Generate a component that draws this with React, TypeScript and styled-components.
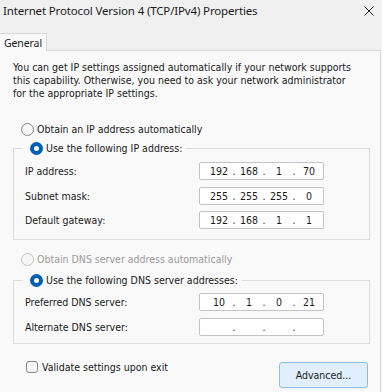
import React from "react";
import styled, { createGlobalStyle } from "styled-components";

const GlobalStyle = createGlobalStyle`
  html, body {
    margin: 0;
    padding: 0;
    background: #f0f0f0;
  }
`;

const dlgFont = `"DejaVu Sans Condensed", "DejaVu Sans", sans-serif`;
const uiFont = `"Noto Sans", "Open Sans", sans-serif`;

const Window = styled.div`
  width: 382px;
  height: 392px;
  background: #f0f0f0;
  overflow: hidden;
  font-family: ${dlgFont};
  font-size: 10.5px;
  color: #1a1a1a;
`;

const TitleBar = styled.div`
  display: flex;
  align-items: center;
  justify-content: space-between;
  height: 21px;
  padding: 0 7px 0 3px;
  font-family: ${uiFont};
  font-size: 11.5px;
  letter-spacing: -0.15px;
  color: #1b1b1b;
`;

const CloseButton = styled.button`
  display: flex;
  align-items: center;
  justify-content: center;
  width: 12px;
  height: 12px;
  padding: 0;
  border: none;
  background: transparent;
  color: #222;
`;

const TabStrip = styled.div`
  display: flex;
  padding-top: 12px;
`;

const Tab = styled.div`
  height: 17px;
  padding: 0 4px 0 4px;
  display: flex;
  align-items: center;
  background: #f9f9f9;
  border: 1px solid #d9d9d9;
  border-left: none;
  border-bottom: none;
  font-family: ${uiFont};
  font-size: 10.5px;
  letter-spacing: -0.1px;
  position: relative;
  z-index: 1;
  margin-bottom: -1px;
`;

const Panel = styled.div`
  width: 381px;
  height: 360px;
  box-sizing: border-box;
  background: #f9f9f9;
  border: 1px solid #d9d9d9;
  border-left: none;
  padding: 10px 10px 0 13px;
`;

const Intro = styled.p`
  margin: 0 0 20px;
  line-height: 13px;
  white-space: nowrap;
`;

const OptionRow = styled.label<{ $disabled?: boolean }>`
  display: flex;
  align-items: center;
  gap: 3px;
  height: 18px;
  padding-left: 8px;
  color: ${({ $disabled }) => ($disabled ? "#9a9a9a" : "#1a1a1a")};
`;

const RadioDot = styled.span<{ $checked?: boolean; $disabled?: boolean }>`
  width: 13px;
  height: 13px;
  box-sizing: border-box;
  border-radius: 50%;
  flex-shrink: 0;
  background: ${({ $checked }) => ($checked ? "#fff" : "#f6f6f6")};
  border: ${({ $checked, $disabled }) =>
    $checked
      ? "4px solid #005fb8"
      : $disabled
      ? "1px solid #c4c4c4"
      : "1px solid #8a8a8a"};
`;

const Group = styled.fieldset<{ $top: number; $padTop: number; $padBottom: number }>`
  margin: ${({ $top }) => $top}px 0 0;
  padding: ${({ $padTop }) => $padTop}px 11px ${({ $padBottom }) => $padBottom}px 11px;
  border: 1px solid #dcdcdc;
  width: 357px;
  box-sizing: border-box;
  min-width: 0;
`;

const GroupLegend = styled.legend`
  padding: 0 4px 0 0;
  margin-left: -3px;
`;

const FieldRow = styled.div`
  display: flex;
  align-items: center;
  justify-content: space-between;
  height: 18px;
  & + & {
    margin-top: 6.5px;
  }
`;

const IpBox = styled.div`
  display: flex;
  align-items: center;
  width: 125px;
  height: 18px;
  box-sizing: border-box;
  margin-right: 34px;
  padding-left: 7px;
  background: #fff;
  border: 1px solid #c4c4c4;
  border-radius: 2px;
`;

const Octet = styled.span`
  width: 24px;
  text-align: center;
`;

const Dot = styled.span`
  width: 6px;
  text-align: center;
`;

const Spacer = styled.div<{ $h: number }>`
  height: ${({ $h }) => $h}px;
`;

const Footer = styled.div`
  display: flex;
  align-items: flex-end;
  justify-content: space-between;
  padding: 14px 2px 0 13px;
`;

const CheckRow = styled.label`
  display: flex;
  align-items: center;
  gap: 4px;
  height: 18px;
  margin-bottom: 12px;
`;

const CheckBox = styled.span`
  width: 12px;
  height: 12px;
  box-sizing: border-box;
  border: 1px solid #8a8a8a;
  border-radius: 3px;
  background: #f6f6f6;
`;

const PushButton = styled.button`
  width: 89px;
  height: 26px;
  padding: 0;
  background: #e1eefb;
  border: 1px solid #8dbbea;
  border-radius: 3px;
  font-family: ${dlgFont};
  font-size: 10.5px;
  color: #1a1a1a;
`;

const IpField = ({ value }: { value?: string }) => {
  const parts = value ? value.split(".") : ["", "", "", ""];
  return (
    <IpBox>
      {parts.map((p, i) => (
        <React.Fragment key={i}>
          <Octet>{p}</Octet>
          {i < 3 && <Dot>.</Dot>}
        </React.Fragment>
      ))}
    </IpBox>
  );
};

const Radio = ({
  label,
  checked,
  disabled,
}: {
  label: string;
  checked?: boolean;
  disabled?: boolean;
}) => (
  <OptionRow $disabled={disabled}>
    <RadioDot $checked={checked} $disabled={disabled} />
    {label}
  </OptionRow>
);

export default function App() {
  return (
    <>
      <GlobalStyle />
      <Window>
        <TitleBar>
          <span>Internet Protocol Version 4 (TCP/IPv4) Properties</span>
          <CloseButton aria-label="Close">
            <svg width="10" height="10" viewBox="0 0 10 10">
              <path d="M0.5 0.5l9 9M9.5 0.5l-9 9" stroke="currentColor" strokeWidth="1" />
            </svg>
          </CloseButton>
        </TitleBar>
        <TabStrip>
          <Tab>General</Tab>
        </TabStrip>
        <Panel>
          <Intro>
            You can get IP settings assigned automatically if your network supports
            <br />
            this capability. Otherwise, you need to ask your network administrator
            <br />
            for the appropriate IP settings.
          </Intro>
          <Radio label="Obtain an IP address automatically" />
          <Group $top={1} $padTop={5} $padBottom={10}>
            <GroupLegend>
              <Radio label="Use the following IP address:" checked />
            </GroupLegend>
            <FieldRow>
              <span>IP address:</span>
              <IpField value="192.168.1.70" />
            </FieldRow>
            <FieldRow>
              <span>Subnet mask:</span>
              <IpField value="255.255.255.0" />
            </FieldRow>
            <FieldRow>
              <span>Default gateway:</span>
              <IpField value="192.168.1.1" />
            </FieldRow>
          </Group>
          <Spacer $h={10} />
          <Radio label="Obtain DNS server address automatically" disabled />
          <Group $top={3} $padTop={4} $padBottom={7}>
            <GroupLegend>
              <Radio label="Use the following DNS server addresses:" checked />
            </GroupLegend>
            <FieldRow>
              <span>Preferred DNS server:</span>
              <IpField value="10.1.0.21" />
            </FieldRow>
            <FieldRow>
              <span>Alternate DNS server:</span>
              <IpField />
            </FieldRow>
          </Group>
          <Footer>
            <CheckRow>
              <CheckBox />
              Validate settings upon exit
            </CheckRow>
            <PushButton>Advanced...</PushButton>
          </Footer>
        </Panel>
      </Window>
    </>
  );
}
